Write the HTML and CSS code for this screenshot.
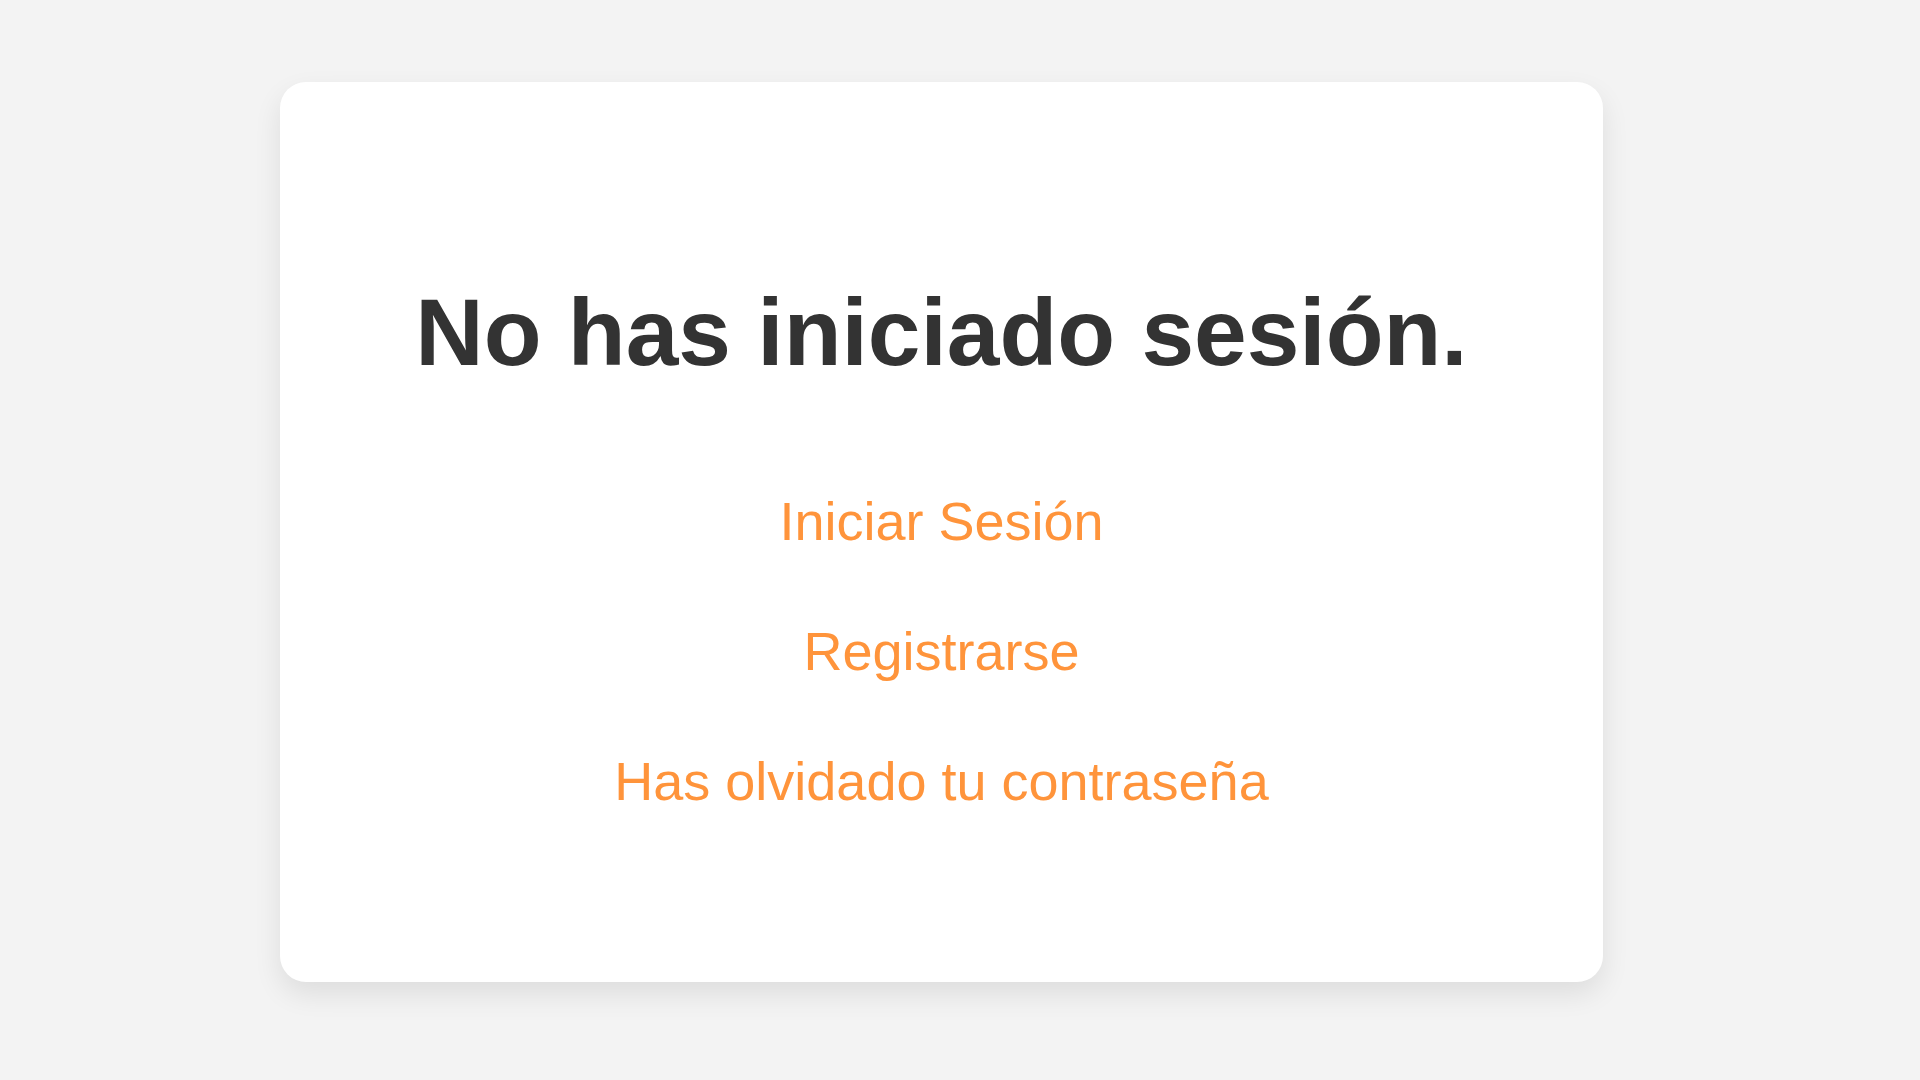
FILE: index.html
```html
<!DOCTYPE html>
<html lang="es">
<head>
<meta charset="utf-8">
<title>No has iniciado sesión</title>
<link rel="stylesheet" href="styles.css">
</head>
<body>
<main class="card">
  <h1 class="title">No has iniciado sesión.</h1>
  <nav class="links">
    <a class="link" href="#">Iniciar Sesión</a>
    <a class="link" href="#">Registrarse</a>
    <a class="link" href="#">Has olvidado tu contraseña</a>
  </nav>
</main>
</body>
</html>
```
FILE: styles.css
```css
html, body {
  margin: 0;
  padding: 0;
}
body {
  background: #f3f3f3;
  font-family: "Liberation Sans", Arial, sans-serif;
  min-height: 1080px;
  overflow: hidden;
}
.card {
  box-sizing: border-box;
  margin: 82px 0 0 280px;
  width: 1323px;
  height: 900px;
  background: #ffffff;
  border-radius: 26px;
  box-shadow: 0 12px 28px rgba(0, 0, 0, 0.09);
  padding-top: 196px;
  display: flex;
  flex-direction: column;
  align-items: center;
}
.title {
  margin: 0;
  font-size: 94.7px;
  line-height: 108px;
  font-weight: 700;
  color: #333333;
  text-align: center;
}
.links {
  margin-top: 104px;
  display: flex;
  flex-direction: column;
  align-items: center;
  gap: 68px;
}
.link {
  display: block;
  font-size: 54px;
  line-height: 62px;
  color: #ff943b;
  text-decoration: none;
}
```
